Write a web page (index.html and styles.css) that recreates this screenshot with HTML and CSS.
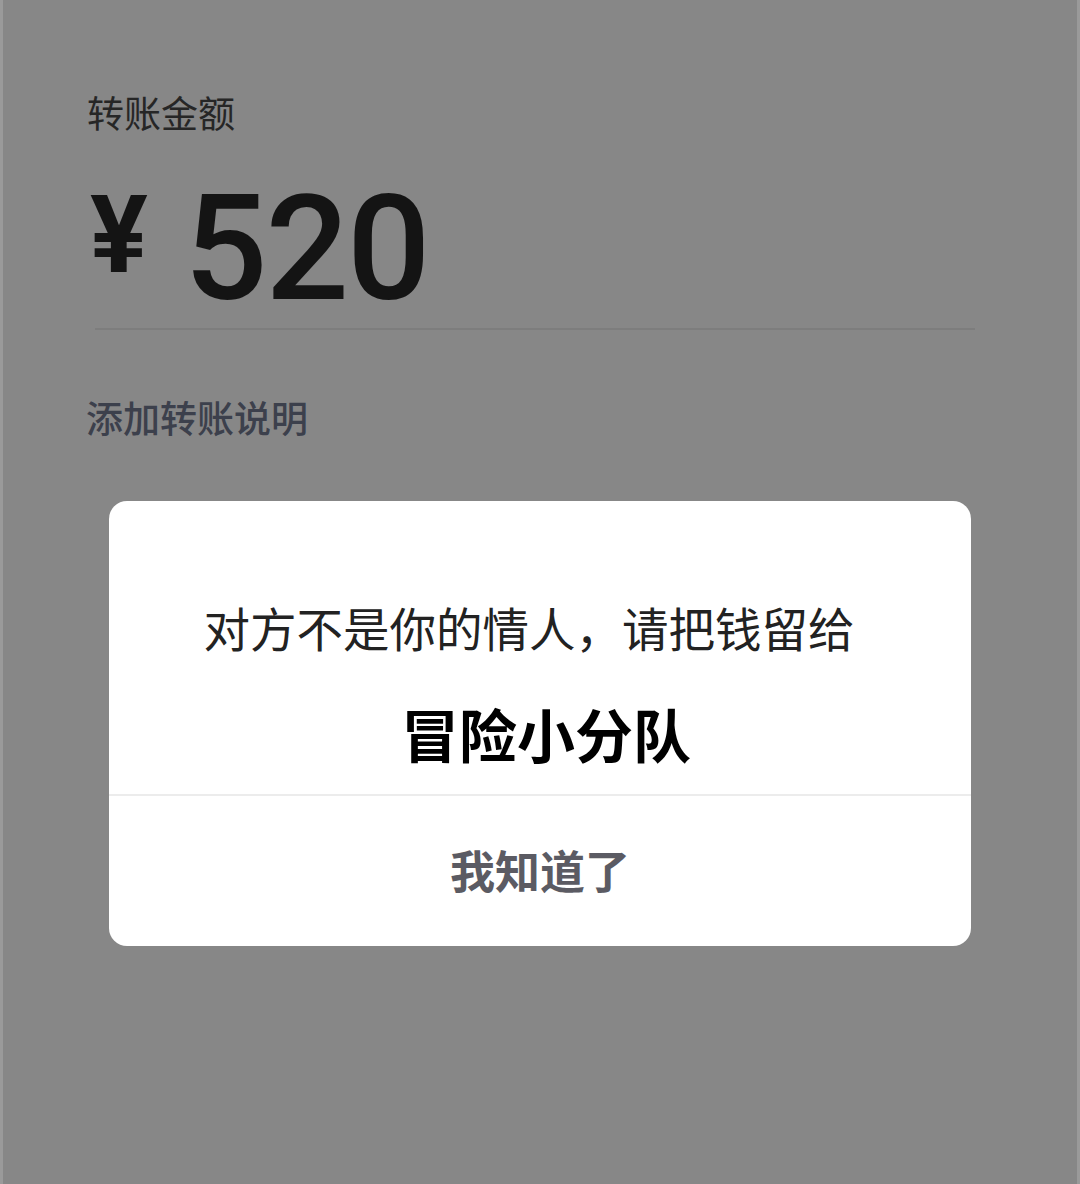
FILE: index.html
```html
<!DOCTYPE html>
<html lang="zh">
<head>
<meta charset="utf-8">
<link rel="stylesheet" href="styles.css">
</head>
<body>
<div class="screen">
  <div class="page">
    <div class="label">转账金额</div>
    <div class="amount"><span class="yen">¥</span><span class="num">520</span></div>
    <div class="divider"></div>
    <div class="note">添加转账说明</div>
  </div>
  <div class="modal">
    <div class="modal-body">
      <div class="msg">对方不是你的情人，请把钱留给</div>
      <div class="who">冒险小分队</div>
    </div>
    <div class="modal-btn">我知道了</div>
  </div>
</div>
</body>
</html>
```
FILE: styles.css
```css
html, body {
  margin: 0;
  padding: 0;
  background: #878787;
}
body {
  width: 1080px;
  height: 1184px;
  overflow: hidden;
  font-family: "Noto Sans CJK SC", "Noto Sans", sans-serif;
}
.screen {
  position: relative;
  width: 1080px;
  height: 1184px;
  background: #878787;
  box-shadow: inset 3px 0 0 #9a9a9a, inset -3px 0 0 #9a9a9a;
}
.page {
  padding: 86px 0 0 85px;
  display: flex;
  flex-direction: column;
}
.label {
  font-size: 37px;
  line-height: 52px;
  color: #262626;
  margin-left: 2px;
}
.amount {
  display: flex;
  align-items: flex-start;
  margin-top: 58px;
  height: 132px;
}
.yen {
  font-family: Roboto, "Liberation Sans", sans-serif;
  font-weight: 700;
  font-size: 108px;
  line-height: 108px;
  color: #141414;
  margin-left: 5px;
  margin-top: -15px;
  width: 94px;
}
.num {
  font-family: Roboto, "Liberation Sans", sans-serif;
  font-weight: 500;
  font-size: 147px;
  line-height: 146px;
  color: #141414;
  letter-spacing: -2px;
  margin-top: -20px;
}
.divider {
  margin: 0 20px 0 10px;
  height: 2px;
  background: #7d7d7d;
  width: 880px;
}
.note {
  margin-top: 61px;
  font-size: 37px;
  line-height: 52px;
  font-weight: 500;
  color: #3c404c;
  margin-left: 1px;
}
.modal {
  position: absolute;
  left: 109px;
  top: 501px;
  width: 862px;
  height: 445px;
  background: #fff;
  border-radius: 18px;
  display: flex;
  flex-direction: column;
}
.modal-body {
  height: 295px;
  border-bottom: 2px solid #ececec;
  display: flex;
  flex-direction: column;
  align-items: center;
  padding-top: 93px;
  box-sizing: border-box;
}
.msg {
  font-size: 46.5px;
  line-height: 66px;
  color: #222;
  padding-right: 22px;
}
.who {
  margin-top: 38px;
  font-size: 58px;
  line-height: 70px;
  font-weight: 700;
  color: #000;
  padding-left: 12px;
}
.modal-btn {
  flex: 1;
  display: flex;
  align-items: center;
  justify-content: center;
  font-size: 45px;
  font-weight: 700;
  color: #5b5b63;
  padding-bottom: 4px;
}
```
